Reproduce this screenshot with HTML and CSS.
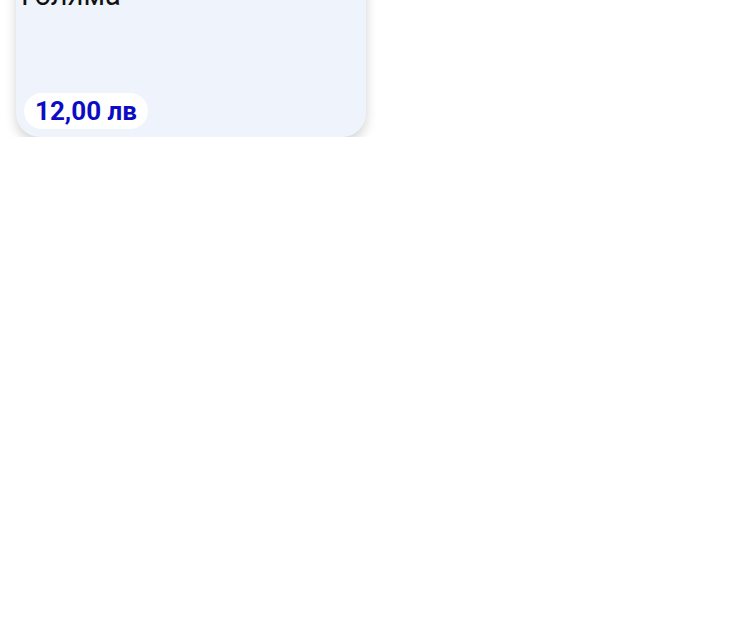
FILE: index.html
```html
<!DOCTYPE html>
<html lang="bg">
<head>
<meta charset="utf-8">
<link rel="stylesheet" href="styles.css">
</head>
<body>
<div class="page">
  <div class="card">
    <div class="title">Голяма</div>
    <div class="price">12,00 лв</div>
  </div>
</div>
</body>
</html>
```
FILE: styles.css
```css
html, body {
  margin: 0;
  padding: 0;
  background: #ffffff;
}
body {
  font-family: Roboto, "Noto Sans", sans-serif;
}
.page {
  padding: 0 16px;
}
.card {
  box-sizing: border-box;
  width: 350px;
  height: 167px;
  margin-top: -30px;
  padding: 8px;
  background: #eef3fc;
  border-radius: 24px;
  box-shadow: 0 5px 12px rgba(0, 0, 0, 0.18);
  display: flex;
  flex-direction: column;
  justify-content: space-between;
  align-items: flex-start;
}
.title {
  font-size: 29px;
  color: #111111;
  margin-left: -3px;
}
.price {
  background: #ffffff;
  border-radius: 18px;
  height: 36px;
  padding: 0 11px;
  display: flex;
  align-items: center;
  font-size: 26px;
  font-weight: 700;
  color: #0c0cc4;
}
```
